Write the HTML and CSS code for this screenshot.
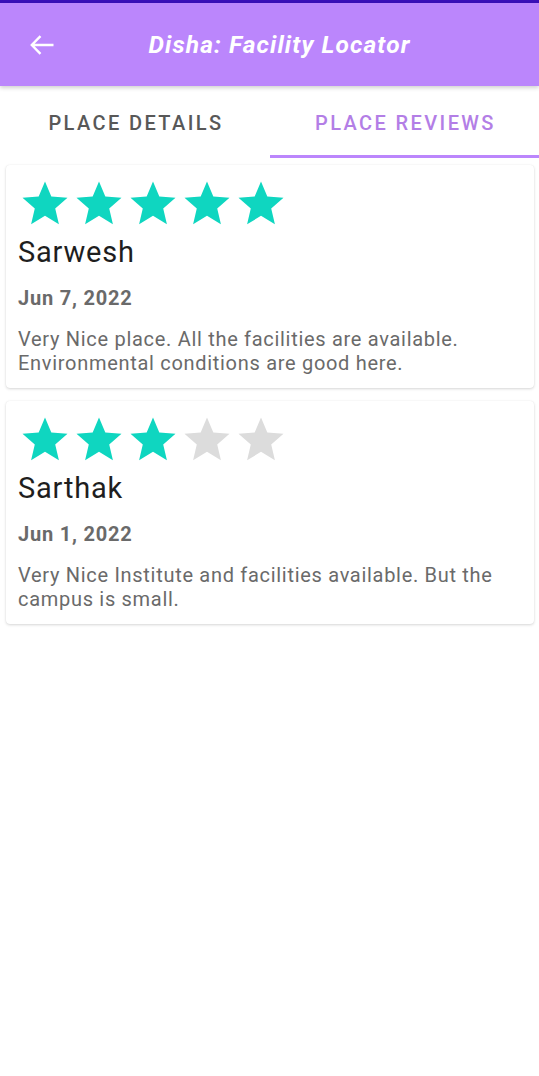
FILE: index.html
```html
<!DOCTYPE html>
<html>
<head>
<meta charset="utf-8">
<link rel="stylesheet" href="styles.css">
</head>
<body>
<div class="topline"></div>
<header class="appbar">
  <svg class="back" viewBox="0 0 24 20" width="24" height="20"><path d="M23.5 10H1.8M10.5 1.2L1.8 10l8.7 8.8" fill="none" stroke="#fff" stroke-width="2.4"/></svg>
  <h1 class="title">Disha: Facility Locator</h1>
</header>
<nav class="tabs">
  <div class="tab">PLACE DETAILS</div>
  <div class="tab active">PLACE REVIEWS</div>
</nav>
<main class="list">
  <section class="card">
    <div class="stars">
      <svg viewBox="0 0 24 24" class="star on"><path d="M12 17.27L18.18 21l-1.64-7.03L22 9.24l-7.19-.61L12 2 9.19 8.63 2 9.24l5.46 4.730L5.82 21z"/></svg>
      <svg viewBox="0 0 24 24" class="star on"><path d="M12 17.27L18.18 21l-1.64-7.03L22 9.24l-7.19-.61L12 2 9.19 8.63 2 9.24l5.46 4.73L5.82 21z"/></svg>
      <svg viewBox="0 0 24 24" class="star on"><path d="M12 17.27L18.18 21l-1.64-7.03L22 9.24l-7.19-.61L12 2 9.19 8.63 2 9.24l5.46 4.73L5.82 21z"/></svg>
      <svg viewBox="0 0 24 24" class="star on"><path d="M12 17.27L18.18 21l-1.64-7.03L22 9.24l-7.19-.61L12 2 9.19 8.63 2 9.24l5.46 4.73L5.82 21z"/></svg>
      <svg viewBox="0 0 24 24" class="star on"><path d="M12 17.27L18.18 21l-1.64-7.03L22 9.24l-7.19-.61L12 2 9.19 8.63 2 9.24l5.46 4.73L5.82 21z"/></svg>
    </div>
    <div class="name">Sarwesh</div>
    <div class="date">Jun 7, 2022</div>
    <p class="body">Very Nice place. All the facilities are available. Environmental conditions are good here.</p>
  </section>
  <section class="card">
    <div class="stars">
      <svg viewBox="0 0 24 24" class="star on"><path d="M12 17.27L18.18 21l-1.64-7.03L22 9.24l-7.19-.61L12 2 9.19 8.63 2 9.24l5.46 4.73L5.82 21z"/></svg>
      <svg viewBox="0 0 24 24" class="star on"><path d="M12 17.27L18.18 21l-1.64-7.03L22 9.24l-7.19-.61L12 2 9.19 8.63 2 9.24l5.46 4.73L5.82 21z"/></svg>
      <svg viewBox="0 0 24 24" class="star on"><path d="M12 17.27L18.18 21l-1.64-7.03L22 9.24l-7.19-.61L12 2 9.19 8.63 2 9.24l5.46 4.73L5.82 21z"/></svg>
      <svg viewBox="0 0 24 24" class="star off"><path d="M12 17.27L18.18 21l-1.64-7.03L22 9.24l-7.19-.61L12 2 9.19 8.63 2 9.24l5.46 4.73L5.82 21z"/></svg>
      <svg viewBox="0 0 24 24" class="star off"><path d="M12 17.27L18.18 21l-1.64-7.03L22 9.24l-7.19-.61L12 2 9.19 8.63 2 9.24l5.46 4.73L5.82 21z"/></svg>
    </div>
    <div class="name">Sarthak</div>
    <div class="date">Jun 1, 2022</div>
    <p class="body">Very Nice Institute and facilities available. But the campus is small.</p>
  </section>
</main>
</body>
</html>
```

FILE: styles.css
```css
* { box-sizing: border-box; }
html, body { margin: 0; padding: 0; background: #fff; }
body { font-family: Roboto, "Noto Sans", sans-serif; width: 539px; min-height: 1076px; }

.topline { height: 3px; background: #3a10b8; }

.appbar {
  height: 83px;
  background: #bb86fc;
  display: flex;
  align-items: center;
  padding-left: 30px;
  position: relative;
  z-index: 2;
  box-shadow: 0 2px 4px rgba(0,0,0,0.18);
}
.back { display: block; flex: none; }
.title {
  margin: 0;
  flex: 1;
  text-align: center;
  padding-right: 34px;
  color: #fff;
  font-size: 24.5px;
  font-weight: 700;
  font-style: italic;
  letter-spacing: 1.1px;
}

.tabs {
  display: flex;
  height: 72px;
  background: #fff;
}
.tab {
  flex: 1;
  display: flex;
  align-items: center;
  justify-content: center;
  font-size: 20px;
  font-weight: 500;
  letter-spacing: 2.4px;
  color: #585858;
  padding-top: 5px;
  padding-left: 2.4px;
  border-bottom: 3px solid transparent;
}
.tab.active { color: #b37ee6; border-bottom-color: #bb86fc; }

.list {
  padding: 7px 5px 0 6px;
  display: flex;
  flex-direction: column;
  gap: 13px;
}
.card {
  background: #fff;
  border-radius: 4px;
  box-shadow: 0 1px 3px rgba(0,0,0,0.16), 0 0 1px rgba(0,0,0,0.08);
  padding: 12px 12px 13px 12px;
}
.stars { display: flex; height: 54px; }
.star { width: 54px; height: 54px; display: block; }
.star.on path { fill: #0fd6c0; }
.star.off path { fill: #dcdcdc; }

.name {
  margin-top: 4px;
  font-size: 29px;
  line-height: 34px;
  letter-spacing: 0.8px;
  color: #1e1e1e;
}
.date {
  margin-top: 17px;
  font-size: 20px;
  line-height: 24px;
  font-weight: 700;
  letter-spacing: 0.8px;
  color: #6a6a6a;
}
.body {
  margin: 17px 0 0 0;
  font-size: 20px;
  line-height: 24px;
  letter-spacing: 0.7px;
  color: #6a6a6a;
}
```
